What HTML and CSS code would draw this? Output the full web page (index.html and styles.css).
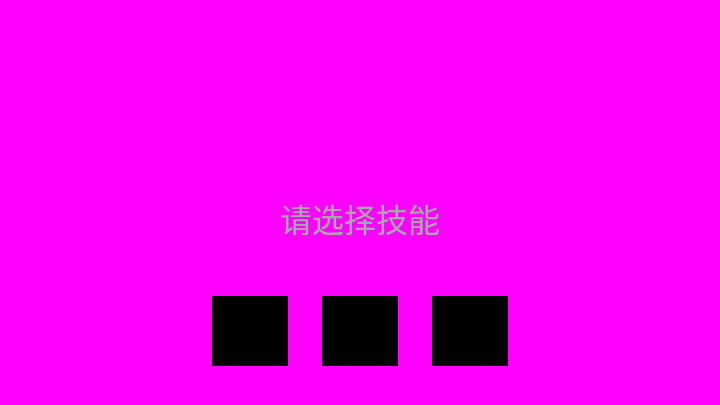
FILE: index.html
```html
<!DOCTYPE html>
<html>
<head>
<meta charset="utf-8">
<link rel="stylesheet" href="styles.css">
</head>
<body>
<div class="screen">
  <div class="title">请选择技能</div>
  <div class="slots">
    <div class="slot"></div>
    <div class="slot"></div>
    <div class="slot"></div>
  </div>
</div>
</body>
</html>
```
FILE: styles.css
```css
html, body {
  margin: 0;
  padding: 0;
  width: 720px;
  height: 405px;
  background: #ff00ff;
  overflow: hidden;
}
.screen {
  display: flex;
  flex-direction: column;
  align-items: center;
  padding-top: 198px;
}
.title {
  font-family: "Noto Sans CJK SC", sans-serif;
  font-size: 32px;
  line-height: 40px;
  color: #a8a8a8;
}
.slots {
  display: flex;
  gap: 34px;
  margin-top: 58px;
  margin-right: 1px;
}
.slot {
  width: 76px;
  height: 70px;
  background: #000;
}
```
